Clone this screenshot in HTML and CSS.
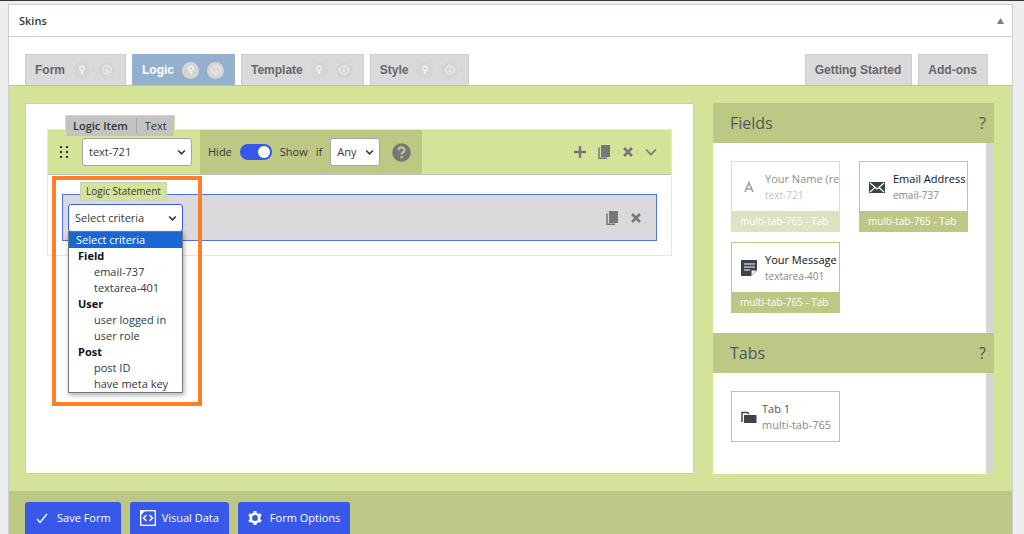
FILE: index.html
```html
<!DOCTYPE html>
<html lang="en">
<head>
<meta charset="utf-8">
<title>Skins</title>
<link rel="stylesheet" href="styles.css">
</head>
<body>
<svg class="defs" aria-hidden="true">
  <symbol id="chevron" viewBox="0 0 8 6"><path d="M1 1.2 4 4.2 7 1.2" fill="none" stroke="currentColor" stroke-width="1.4"/></symbol>
  <symbol id="bulb" viewBox="0 0 10 10"><circle cx="5" cy="3.4" r="2.3" fill="none" stroke="currentColor" stroke-width="1.3"/><path d="M5 5.5V9M3.8 7.6h2.4" fill="none" stroke="currentColor" stroke-width="1.4"/></symbol>
  <symbol id="info" viewBox="0 0 10 10"><circle cx="5" cy="5" r="4.2" fill="none" stroke="currentColor"/><path d="M5 4.4V7.6M5 2.4v1.2" stroke="currentColor" stroke-width="1.3"/></symbol>
  <symbol id="copy" viewBox="0 0 14 16"><path d="M4 1h9v12H4z" fill="currentColor"/><path d="M2 3.5V14.300h8" fill="none" stroke="currentColor" stroke-width="1.5"/></symbol>
  <symbol id="cross" viewBox="0 0 12 12"><path d="M2 2 10 10M10 2 2 10" stroke="currentColor" stroke-width="2.6"/></symbol>
  <symbol id="plus" viewBox="0 0 12 12"><path d="M6 0v12M0 6h12" stroke="currentColor" stroke-width="2.400"/></symbol>
</svg>
<main class="postbox">
  <header class="postbox-head">
    <h2>Skins</h2>
    <button class="toggle-box" aria-label="Toggle panel"><svg width="7" height="6" viewBox="0 0 7 6"><path d="M3.5 0 7 6H0z" fill="currentColor"/></svg></button>
  </header>
  <nav class="tabs">
    <div class="tab"><a href="#form">Form</a><button aria-label="Form tips"><svg><use href="#bulb"/></svg></button><button aria-label="Form info"><svg><use href="#info"/></svg></button></div>
    <div class="tab active"><a href="#logic">Logic</a><button aria-label="Logic tips"><svg><use href="#bulb"/></svg></button><button aria-label="Logic info"><svg><use href="#info"/></svg></button></div>
    <div class="tab"><a href="#template">Template</a><button aria-label="Template tips"><svg><use href="#bulb"/></svg></button><button aria-label="Template info"><svg><use href="#info"/></svg></button></div>
    <div class="tab"><a href="#style">Style</a><button aria-label="Style tips"><svg><use href="#bulb"/></svg></button><button aria-label="Style info"><svg><use href="#info"/></svg></button></div>
    <div class="tab push"><a href="#start">Getting Started</a></div>
    <div class="tab"><a href="#addons">Add-ons</a></div>
  </nav>
  <div class="workspace">
    <section class="builder">
      <div class="logic-item">
        <div class="item-badge"><strong>Logic Item</strong><span>Text</span></div>
        <div class="item-bar">
          <div class="item-field">
            <svg class="grip" width="8" height="14" viewBox="0 0 8 14"><path d="M0 1h2v2H0zM6 1h2v2H6zM0 6h2v2H0zM6 6h2v2H6zM0 11h2v2H0zM6 11h2v2H6z" fill="#333"/></svg>
            <span class="select wide"><select aria-label="Field"><option>text-721</option></select><svg><use href="#chevron"/></svg></span>
          </div>
          <div class="item-rule">
            <label for="visibility">Hide</label>
            <input class="switch" type="checkbox" id="visibility" checked>
            <label for="visibility">Show</label>
            <label for="match">if</label>
            <span class="select"><select id="match"><option>Any</option></select><svg><use href="#chevron"/></svg></span>
            <button class="help" aria-label="Help"><svg width="19" height="19" viewBox="0 0 19 19"><circle cx="9.500" cy="9.500" r="9.300" fill="#777"/><path d="M6.600 7.200C6.600 3.500 12.600 3.600 12.600 7c0 2.300-3 2.200-3 4.500M9.600 13v2.400" fill="none" stroke="#bcc884" stroke-width="2.200"/></svg></button>
          </div>
          <div class="actions">
            <button aria-label="Add"><svg width="12" height="12"><use href="#plus"/></svg></button>
            <button aria-label="Duplicate"><svg width="14" height="16"><use href="#copy"/></svg></button>
            <button aria-label="Remove"><svg width="12" height="12"><use href="#cross"/></svg></button>
            <button aria-label="Collapse"><svg width="12" height="12" viewBox="0 0 12 12"><path d="M1 3.500 6 8.500 11 3.500" fill="none" stroke="currentColor" stroke-width="1.700"/></svg></button>
          </div>
        </div>
        <div class="item-body">
          <div class="statement">
            <span class="statement-badge">Logic Statement</span>
            <div class="criteria">
              <span class="select criteria-select"><select aria-label="Criteria"><option>Select criteria</option></select><svg><use href="#chevron"/></svg></span>
              <ul class="menu" role="listbox" aria-label="Criteria options">
                <li class="selected" role="option" aria-selected="true">Select criteria</li>
                <li class="group">Field</li>
                <li role="option">email-737</li>
                <li role="option">textarea-401</li>
                <li class="group">User</li>
                <li role="option">user logged in</li>
                <li role="option">user role</li>
                <li class="group">Post</li>
                <li role="option">post ID</li>
                <li role="option">have meta key</li>
              </ul>
            </div>
            <div class="actions">
              <button aria-label="Duplicate statement"><svg width="14" height="16"><use href="#copy"/></svg></button>
              <button aria-label="Remove statement"><svg width="12" height="12"><use href="#cross"/></svg></button>
            </div>
          </div>
        </div>
        <div class="highlight"></div>
      </div>
    </section>
    <aside class="sidebar">
      <header class="side-head"><h3>Fields</h3><button aria-label="Fields help">?</button></header>
      <div class="side-panel fields">
        <article class="card used">
          <div class="card-main"><svg width="18" height="18" viewBox="0 0 18 18"><path d="M5 14 9 4.500 13 14M6.500 11h5" fill="none" stroke="#3c434a" stroke-width="1.600"/></svg><div><b>Your Name (re</b><small>text-721</small></div></div>
          <footer>multi-tab-765 - Tab</footer>
        </article>
        <article class="card">
          <div class="card-main"><svg width="18" height="18" viewBox="0 0 18 18"><path d="M1 4h16v11H1z" fill="#3c434a"/><path d="M2 5l7 6 7-6M2 14l5-4.500M16 14l-5-4.500" fill="none" stroke="#fff" stroke-width="1.200"/></svg><div><b>Email Address</b><small>email-737</small></div></div>
          <footer>multi-tab-765 - Tab</footer>
        </article>
        <article class="card">
          <div class="card-main"><svg width="18" height="18" viewBox="0 0 18 18"><path d="M1 1h16v10l-6 6H1z" fill="#3c434a"/><path d="M4 5h11M4 8h11M4 11h6" stroke="#fff" stroke-width="1.200"/><path d="M11.500 16v-4.500H16z" fill="#fff"/></svg><div><b>Your Message</b><small>textarea-401</small></div></div>
          <footer>multi-tab-765 - Tab</footer>
        </article>
      </div>
      <header class="side-head"><h3>Tabs</h3><button aria-label="Tabs help">?</button></header>
      <div class="side-panel tab-list">
        <article class="card tab-card">
          <div class="card-main"><svg width="18" height="18" viewBox="0 0 18 18"><path d="M2 14V4.500h5.500L9 6" fill="none" stroke="#3c434a" stroke-width="1.500"/><path d="M4 7h12.500v8H4z" fill="#3c434a"/></svg><div><b>Tab 1</b><small>multi-tab-765</small></div></div>
        </article>
      </div>
    </aside>
  </div>
  <footer class="toolbar">
    <button><svg width="14" height="14" viewBox="0 0 14 14"><path d="M2 8l3 3.500L12 3" fill="none" stroke="currentColor" stroke-width="1.300"/></svg>Save Form</button>
    <button class="framed"><svg width="16" height="16" viewBox="0 0 16 16"><rect x=".7" y=".7" width="14.600" height="14.600" fill="none" stroke="currentColor" stroke-width="1.300"/><path d="M1 1h4L1 5z" fill="currentColor"/><path d="M6.500 5 3.500 8l3 3M9.500 5l3 3-3 3" fill="none" stroke="currentColor" stroke-width="1.500"/></svg>Visual Data</button>
    <button><svg width="14" height="14" viewBox="0 0 14 14"><circle cx="7" cy="7" r="4.200" fill="none" stroke="currentColor" stroke-width="2.600"/><path d="M7 0v3M7 11v3M1 3.500l2.400 1.400M10.600 9.100 13 10.500M1 10.500l2.400-1.400M10.600 4.900 13 3.500" stroke="currentColor" stroke-width="3"/></svg>Form Options</button>
  </footer>
</main>
</body>
</html>
```
FILE: styles.css
```css
* { box-sizing: border-box; }
body {
  margin: 0;
  padding: 3px 11px 0 8px;
  border-top: 1px solid #32373c;
  background: #efeeef;
  color: #32373c;
  font: 11px/16px "Open Sans", "Noto Sans", sans-serif;
}
.defs { display: none; }
button { padding: 0; border: 0; background: none; color: inherit; font: inherit; display: flex; align-items: center; justify-content: center; }
svg { flex: none; }
h2, h3, ul { margin: 0; padding: 0; }

.postbox { background: #fff; border: 1px solid #ccd0d4; border-bottom: 0; }
.postbox-head { display: flex; align-items: center; justify-content: space-between; height: 32px; padding: 0 8px 0 10px; border-bottom: 1px solid #ccd0d4; }
.postbox-head h2 { font-size: 11px; font-weight: 600; }
.toggle-box { color: #787c82; }

.tabs { display: flex; gap: 6px; padding: 17px 24px 0 16px; }
.tab { display: flex; align-items: center; gap: 8px; height: 31px; padding: 0 10px 0 9px; background: #dadadc; border: 1px solid #ccc; border-bottom: 0; }
.tab a { color: #666; font: bold 12px/16px "Liberation Sans", Arial, sans-serif; text-decoration: none; }
.tab button { width: 17px; height: 17px; border-radius: 50%; background: #d5d5d5; color: #f4f4f4; }
.tab button svg { width: 10px; height: 10px; }
.tab.active { background: #94b0ce; border-color: #94b0ce; }
.tab.active a { color: #fff; }
.tab.push { margin-left: auto; }

.workspace { display: flex; gap: 19px; padding: 17px 18px 17px 16px; background: #d3e397; border-top: 1px solid #bcc884; }
.builder { flex: 1; padding: 25px 21px; background: #fff; border: 1px solid #c8d68e; min-height: 371px; }
.logic-item { position: relative; border: 1px solid #e6e6e6; }
.item-badge { position: absolute; left: 17px; top: -15px; display: flex; align-items: center; height: 22px; padding: 0 7px; background: #c3c3c3; border: 1px solid #d3e397; }
.item-badge strong { font-weight: 600; padding-right: 8px; border-right: 1px solid #aaa; }
.item-badge span { padding-left: 8px; }
.item-bar { display: flex; align-items: center; height: 45px; background: #d3e397; border-bottom: 1px solid #c3c3c3; }
.item-field { display: flex; align-items: center; gap: 14px; padding: 0 8px 0 12px; }
.item-rule { display: flex; align-items: center; align-self: stretch; gap: 8px; padding: 0 11px 0 8px; background: #bcc884; }
.item-rule .help { margin-left: 4px; }
.select { position: relative; display: flex; }
.select select { appearance: none; height: 28px; padding: 0 22px 0 6px; border: 1px solid #a3a59f; border-radius: 3px; background: #fff; color: #32373c; font: inherit; }
.select svg { position: absolute; right: 6px; top: 11px; width: 9px; height: 7px; pointer-events: none; }
.select.wide select { width: 110px; }
.switch { appearance: none; width: 32px; height: 16px; margin: 0; padding: 2px; border-radius: 8px; background: #3858e9; display: flex; justify-content: flex-end; }
.switch::before { content: ""; width: 12px; height: 12px; border-radius: 50%; background: #fff; }
.actions { display: flex; align-items: center; gap: 11px; margin-left: auto; padding-right: 14px; color: #777; }

.item-body { padding: 19px 14px 14px; }
.statement { position: relative; display: flex; align-items: center; height: 47px; padding-left: 5px; background: #dadadc; border: 1px solid #4f72ea; }
.statement-badge { position: absolute; left: 17px; top: -13px; height: 19px; padding: 0 5px; background: #d3e397; border: 1px solid #ccd0c0; font-size: 10px; line-height: 17px; }
.criteria { position: relative; }
.criteria-select select { width: 115px; border-color: #3858e9; }
.menu { position: absolute; z-index: 2; top: 27px; left: 0; width: 115px; border: 1px solid #767676; background: #fff; list-style: none; box-shadow: 1px 2px 5px #0005; }
.menu li { padding-left: 25px; white-space: nowrap; }
.menu .group { padding-left: 9px; font-weight: bold; color: #111; }
.menu .selected { padding-left: 7px; background: #1967d2; color: #fff; }
.highlight { position: absolute; left: 4px; top: 46px; width: 150px; height: 230px; border: 4px solid #ff7f27; pointer-events: none; }

.sidebar { flex: none; width: 281px; display: flex; flex-direction: column; }
.side-head { display: flex; align-items: center; justify-content: space-between; height: 40px; padding: 0 8px 0 17px; background: #bcc884; color: #50575e; }
.side-head h3, .side-head button { font-weight: 400; font-size: 16px; line-height: 24px; }
.side-panel { display: flex; flex-wrap: wrap; align-content: flex-start; gap: 10px 19px; padding: 18px 17px 18px 18px; background: #fff; border-right: 8px solid #d6d6d6; }
.fields { min-height: 190px; }
.tab-list { flex: 1; }
.card { width: 109px; border: 1px solid #bcc884; overflow: hidden; white-space: nowrap; }
.card-main { display: flex; align-items: center; gap: 7px; height: 49px; padding: 0 8px; }
.card b, .card small { display: block; font-size: 11px; font-weight: 400; line-height: 16px; }
.card b { color: #111; }
.card small { color: #888; font-size: 10px; }
.card footer { height: 20px; padding-left: 8px; background: #bcc884; color: #fff; font-size: 10px; line-height: 20px; }
.card.used { opacity: 0.5; }
.tab-card .card-main { gap: 4px; }
.tab-card b { color: #50575e; }
.tab-card small { font-size: 11px; }

.toolbar { display: flex; gap: 9px; padding: 11px 16px 0; background: #bcc884; }
.toolbar button { gap: 8px; height: 32px; padding: 0 10px; border-radius: 3px 3px 0 0; background: #3858e9; color: #fff; }
.toolbar .framed { gap: 6px; padding: 0 10px; }
```
